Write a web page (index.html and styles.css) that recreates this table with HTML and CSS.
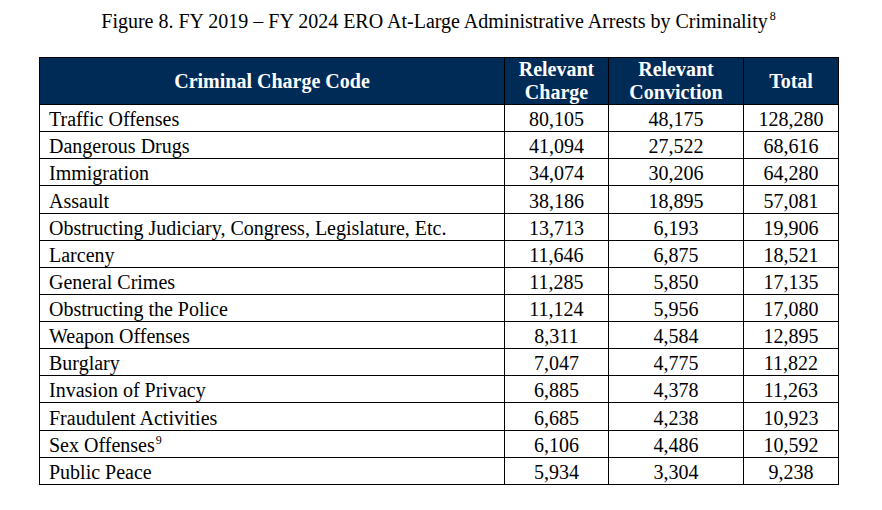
FILE: index.html
```html
<!DOCTYPE html>
<html>
<head>
<meta charset="utf-8">
<link rel="stylesheet" href="styles.css">
</head>
<body>
<div class="figure">
  <h1 class="title">Figure 8. FY 2019 – FY 2024 ERO At-Large Administrative Arrests by Criminality<sup>8</sup></h1>
  <table class="data">
    <colgroup>
      <col class="c-name">
      <col class="c-charge">
      <col class="c-conv">
      <col class="c-total">
    </colgroup>
    <thead>
      <tr>
        <th>Criminal Charge Code</th>
        <th>Relevant<br>Charge</th>
        <th>Relevant<br>Conviction</th>
        <th>Total</th>
      </tr>
    </thead>
    <tbody>
      <tr><td>Traffic Offenses</td><td>80,105</td><td>48,175</td><td>128,280</td></tr>
      <tr><td>Dangerous Drugs</td><td>41,094</td><td>27,522</td><td>68,616</td></tr>
      <tr><td>Immigration</td><td>34,074</td><td>30,206</td><td>64,280</td></tr>
      <tr><td>Assault</td><td>38,186</td><td>18,895</td><td>57,081</td></tr>
      <tr><td>Obstructing Judiciary, Congress, Legislature, Etc.</td><td>13,713</td><td>6,193</td><td>19,906</td></tr>
      <tr><td>Larceny</td><td>11,646</td><td>6,875</td><td>18,521</td></tr>
      <tr><td>General Crimes</td><td>11,285</td><td>5,850</td><td>17,135</td></tr>
      <tr><td>Obstructing the Police</td><td>11,124</td><td>5,956</td><td>17,080</td></tr>
      <tr><td>Weapon Offenses</td><td>8,311</td><td>4,584</td><td>12,895</td></tr>
      <tr><td>Burglary</td><td>7,047</td><td>4,775</td><td>11,822</td></tr>
      <tr><td>Invasion of Privacy</td><td>6,885</td><td>4,378</td><td>11,263</td></tr>
      <tr><td>Fraudulent Activities</td><td>6,685</td><td>4,238</td><td>10,923</td></tr>
      <tr><td>Sex Offenses<sup>9</sup></td><td>6,106</td><td>4,486</td><td>10,592</td></tr>
      <tr><td>Public Peace</td><td>5,934</td><td>3,304</td><td>9,238</td></tr>
    </tbody>
  </table>
</div>
</body>
</html>
```

FILE: styles.css
```css
html, body {
  margin: 0;
  padding: 0;
  background: #ffffff;
}

body {
  font-family: "Liberation Serif", "Times New Roman", serif;
  color: #000000;
}

.figure {
  width: 799px;
  margin-left: 39px;
  padding-top: 10px;
}

.title {
  margin: 0 0 24px 0;
  font-size: 20px;
  font-weight: normal;
  text-align: center;
  line-height: 23px;
  white-space: nowrap;
}

.title sup {
  font-size: 12px;
  vertical-align: 8px;
  line-height: 0;
  margin-left: 2px;
}

.data {
  width: 799px;
  border-collapse: collapse;
  table-layout: fixed;
  font-size: 20px;
}

.c-name { width: 465px; }
.c-charge { width: 104px; }
.c-conv { width: 135px; }
.c-total { width: 95px; }

.data th {
  background: #012b57;
  color: #ffffff;
  font-weight: bold;
  border: 1px solid #000000;
  height: 46px;
  padding: 0;
  line-height: 23px;
  text-align: center;
  vertical-align: middle;
}

.data td {
  border: 1px solid #000000;
  height: 26.14px;
  padding: 0;
  line-height: 23px;
  text-align: center;
  vertical-align: bottom;
  white-space: nowrap;
}

.data td:first-child {
  text-align: left;
  padding-left: 9px;
}

.data td sup {
  font-size: 12px;
  line-height: 0;
  vertical-align: 8px;
  margin-left: 1px;
}
```
